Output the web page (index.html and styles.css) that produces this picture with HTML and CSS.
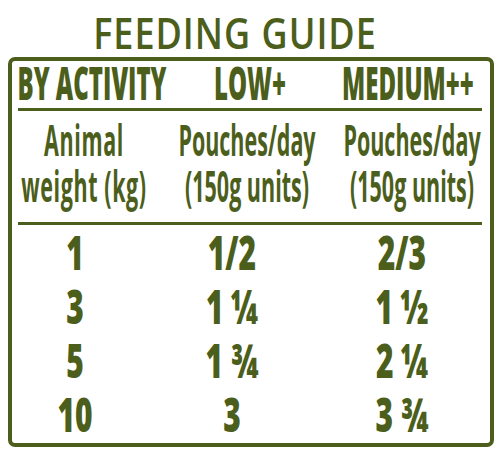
FILE: index.html
```html
<!DOCTYPE html>
<html>
<head>
	<title>feeding guide</title>
	<link rel="stylesheet" href="styles.css">
</head>
<body>
	<div id='guide'>
		<h1 class='title'><span class='tall'>FEEDING GUIDE</span></h1>

		<div class='card'>
			<div class='row head'>
				<div class='cell'><span class='tall'>BY ACTIVITY</span></div>
				<div class='cell'><span class='tall'>LOW+</span></div>
				<div class='cell'><span class='tall'>MEDIUM++</span></div>
			</div>

			<div class='row sub'>
				<div class='cell'><span class='tall wide'>Animal<br>weight (kg)</span></div>
				<div class='cell'><span class='tall'>Pouches/day<br>(150g units)</span></div>
				<div class='cell'><span class='tall'>Pouches/day<br>(150g units)</span></div>
			</div>

			<div class='row num'>
				<div class='cell'><span class='tall'>1</span></div>
				<div class='cell'><span class='tall'>1/2</span></div>
				<div class='cell'><span class='tall'>2/3</span></div>
			</div>
			<div class='row num'>
				<div class='cell'><span class='tall'>3</span></div>
				<div class='cell'><span class='tall'>1 &frac14;</span></div>
				<div class='cell'><span class='tall'>1 &frac12;</span></div>
			</div>
			<div class='row num'>
				<div class='cell'><span class='tall'>5</span></div>
				<div class='cell'><span class='tall'>1 &frac34;</span></div>
				<div class='cell'><span class='tall'>2 &frac14;</span></div>
			</div>
			<div class='row num'>
				<div class='cell'><span class='tall'>10</span></div>
				<div class='cell'><span class='tall'>3</span></div>
				<div class='cell'><span class='tall'>3 &frac34;</span></div>
			</div>
		</div>
	</div>
</body>
</html>
```

FILE: styles.css
```css
body {
	margin: 0;
	background-color: #ffffff;
	color: #4c5e1b;
	font-family: "Open Sans", "DejaVu Sans", sans-serif;
}

#guide {
	padding: 0 6px 0 8px;
}

/* the lettering is very narrow, so a small font is stretched upwards */
.tall {
	display: inline-block;
	white-space: nowrap;
	text-align: center;
}

.title {
	margin: 0;
	height: 36px;
	padding: 15px 32px 6px 0;
	font-size: 36px;
	font-weight: 600;
	line-height: 36px;
	display: flex;
	justify-content: center;
}

.title .tall {
	transform: scaleY(1.2);
	letter-spacing: 1px;
}

.card {
	border: 4px solid #4c5e1b;
	border-radius: 7px;
	padding: 0 8px 2px 6px;
	font-weight: 700;
}

.row {
	display: grid;
}

.cell {
	display: flex;
	justify-content: center;
	align-items: center;
}

.head {
	grid-template-columns: 148px 168px 148px;
	height: 44px;
	font-size: 24px;
	line-height: 30px;
	font-weight: 800;
	padding-bottom: 3px;
	border-bottom: 3px solid #4c5e1b;
}

.head .tall {
	transform: scaleY(1.92);
}

.sub {
	grid-template-columns: 132px 194px 136px;
	height: 102px;
	font-size: 21.5px;
	line-height: 22.5px;
	padding-bottom: 9px;
	border-bottom: 3px solid #4c5e1b;
}

.sub .tall {
	transform: scaleY(2);
}

.sub .wide {
	letter-spacing: 0.6px;
}

.num {
	grid-template-columns: 114px 200px 140px;
	height: 54px;
	font-size: 30px;
	line-height: 34px;
	font-weight: 800;
}

.num .tall {
	transform: scaleY(1.62);
}
```
